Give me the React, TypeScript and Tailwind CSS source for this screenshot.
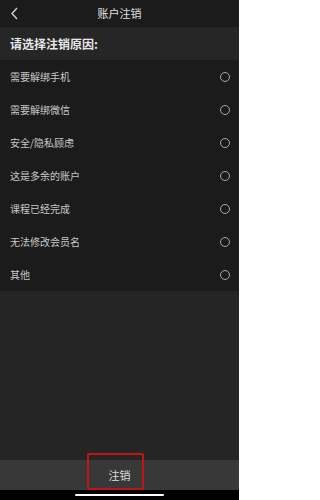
import React from "react";

const reasons = [
  "需要解绑手机",
  "需要解绑微信",
  "安全/隐私顾虑",
  "这是多余的账户",
  "课程已经完成",
  "无法修改会员名",
  "其他",
];

export default function App() {
  return (
    <div
      className="relative w-[239px] h-[500px] bg-[#252525] flex flex-col overflow-hidden"
      style={{ fontFamily: '"Noto Sans CJK SC", "Noto Sans", sans-serif' }}
    >
      <div className="relative h-[27px] bg-[#1b1b1b] flex items-center justify-center shrink-0">
        <svg className="absolute left-[10px] top-[7px]" width="9" height="13" viewBox="0 0 9 13">
          <path d="M7 1 L2 6.5 L7 12" fill="none" stroke="#d0d0d0" strokeWidth="1.4" />
        </svg>
        <span className="text-[11px] text-[#e0e0e0] leading-none">账户注销</span>
      </div>
      <div className="h-[33px] bg-[#262626] flex items-center px-[10px] shrink-0">
        <span className="text-[12px] font-bold text-[#e8e8e8] leading-none">请选择注销原因:</span>
      </div>
      <div className="bg-[#1b1b1b] flex flex-col shrink-0">
        {reasons.map((r) => (
          <div key={r} className="h-[33px] flex items-center justify-between pl-[10px] pr-[9px]">
            <span className="text-[10px] text-[#c8c8c8] leading-none">{r}</span>
            <div className="w-[10px] h-[10px] rounded-full border border-[#a8a8a8]" />
          </div>
        ))}
      </div>
      <div className="flex-1" />
      <div className="h-[30px] bg-[#383838] flex items-center justify-center shrink-0">
        <span className="text-[11px] text-[#dedede] leading-none">注销</span>
      </div>
      <div className="h-[10px] bg-black flex items-center justify-center shrink-0">
        <div className="w-[89px] h-[2px] bg-white rounded-full" />
      </div>
      <div className="absolute left-[87px] top-[453px] w-[57px] h-[37px] border-2 border-solid border-[#c01515] rounded-[2px]" />
    </div>
  );
}
